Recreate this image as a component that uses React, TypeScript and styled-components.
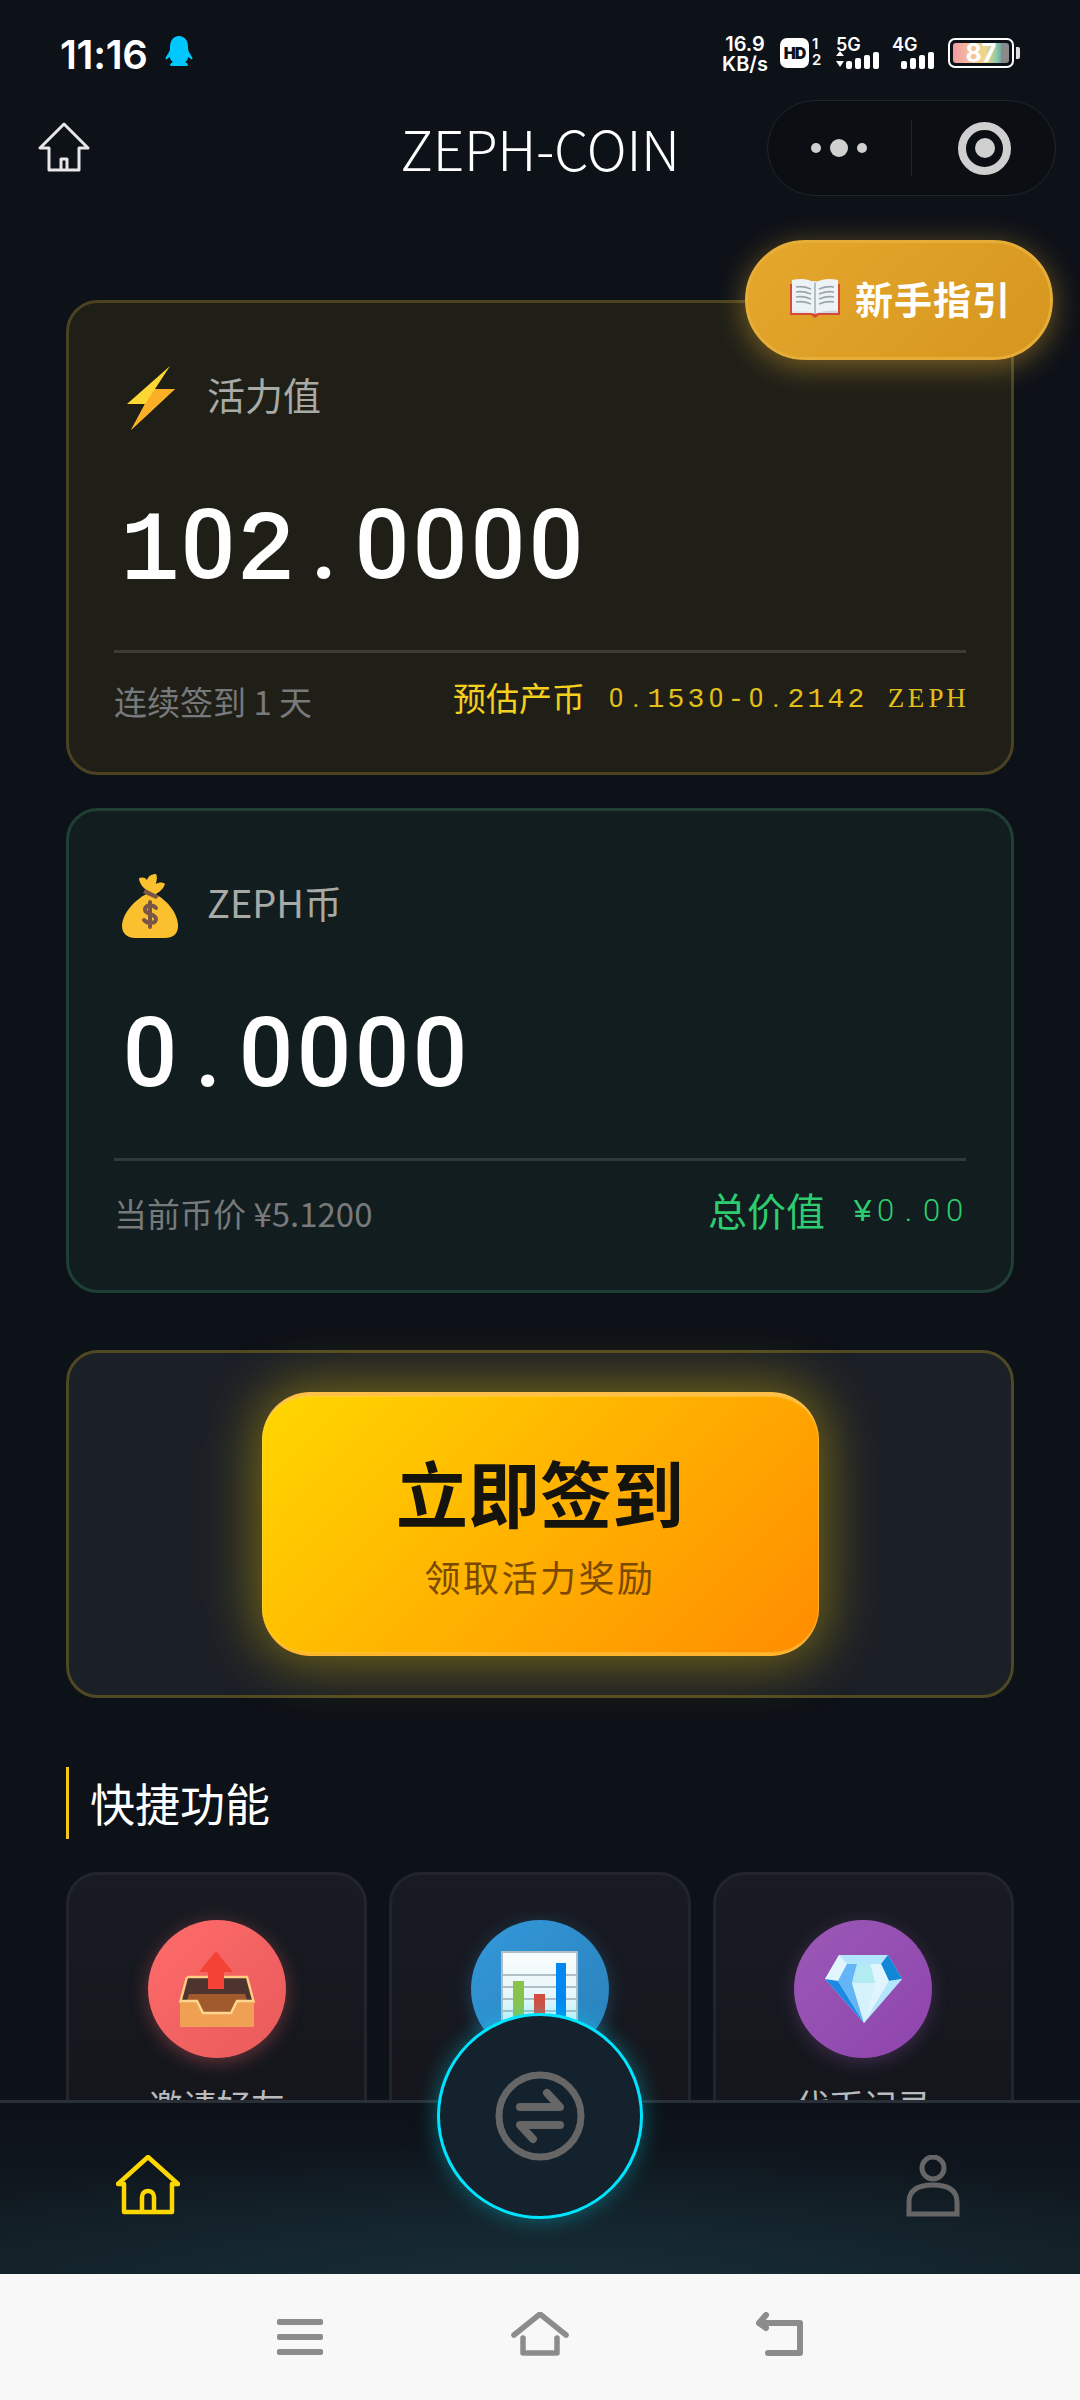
import React from "react";
import styled, { createGlobalStyle } from "styled-components";

const CJK = `"Noto Sans CJK SC", "Noto Sans", sans-serif`;
const MONO = `"Liberation Mono", "Noto Sans CJK SC", monospace`;

const Global = createGlobalStyle`
  html, body { margin: 0; padding: 0; background: #0d1118; }
  * { box-sizing: border-box; }
`;

const Screen = styled.div`
  position: relative;
  width: 1080px;
  height: 2400px;
  display: flex;
  flex-direction: column;
  overflow: hidden;
  background: #0d1118;
  font-family: ${CJK};
  color: #fff;
`;

const StatusBar = styled.div`
  height: 96px;
  flex: none;
  display: flex;
  justify-content: space-between;
  padding: 36px 66px 0 60px;
`;

const StatusLeft = styled.div`
  display: flex;
  align-items: flex-start;
  gap: 17px;
`;

const Time = styled.div`
  font-family: Inter, sans-serif;
  font-size: 40px;
  font-weight: 600;
  line-height: 36px;
  letter-spacing: -0.3px;
  padding-top: 1px;
`;

const StatusRight = styled.div`
  display: flex;
  align-items: flex-start;
  gap: 12px;
  font-family: Inter, sans-serif;
  font-weight: 600;
`;

const Speed = styled.div`
  display: flex;
  flex-direction: column;
  align-items: center;
  font-size: 20px;
  line-height: 20px;
  width: 46px;
  margin-top: -2px;
`;

const HdBadge = styled.div`
  width: 29px;
  height: 30px;
  margin-top: 2px;
  border-radius: 7px;
  background: #fff;
  color: #0d1118;
  font-size: 16px;
  font-weight: 900;
  line-height: 30px;
  text-align: center;
  letter-spacing: -1px;
`;

const SimNumbers = styled.div`
  display: flex;
  flex-direction: column;
  margin-left: -9px;
  font-size: 15px;
  line-height: 16px;
  width: 12px;
`;

const Signal = styled.div<{ $w: number }>`
  width: ${(p) => p.$w}px;
  height: 34px;
  font-size: 18px;
  line-height: 17px;
`;

const SignalSvg = styled.svg`
  display: block;
  margin-top: -2px;
`;

const Battery = styled.div`
  width: 66px;
  height: 30px;
  margin-top: 2px;
  padding: 3px;
  border: 2px solid #fff;
  border-radius: 7px;
  position: relative;
  &::after {
    content: "";
    position: absolute;
    right: -8px;
    top: 7px;
    width: 4px;
    height: 12px;
    background: #ddd;
    border-radius: 0 2px 2px 0;
  }
`;

const BatteryFill = styled.div`
  height: 100%;
  border-radius: 3px;
  background: linear-gradient(90deg, #f09aa0 0%, #f4b8a0 25%, #eed88c 58%, #8cc8a8 78%, #6ea8a0 86%, #8a8a8a 86%);
  text-align: center;
  font-size: 25px;
  font-weight: 700;
  line-height: 21px;
`;

const NavBar = styled.div`
  height: 110px;
  flex: none;
  position: relative;
  display: flex;
  align-items: center;
  justify-content: center;
  padding-bottom: 8px;
`;

const NavHome = styled.svg`
  position: absolute;
  left: 38px;
  top: 26px;
`;

const Title = styled.div`
  font-family: "Noto Sans CJK SC", sans-serif;
  font-weight: 300;
  font-size: 55px;
  line-height: 60px;
  letter-spacing: -0.3px;
`;

const Capsule = styled.div`
  position: absolute;
  left: 767px;
  top: 4px;
  width: 289px;
  height: 96px;
  border-radius: 48px;
  border: 1px solid #22252b;
  background: #0b0e13;
  display: flex;
  align-items: center;
`;

const CapsuleHalf = styled.div`
  flex: 1;
  display: flex;
  align-items: center;
  justify-content: center;
  &:first-child {
    border-right: 1px solid #22252b;
    height: 56px;
  }
`;

const Dots = styled.div`
  display: flex;
  align-items: center;
  gap: 9px;
  margin-left: -2px;
`;

const Dot = styled.span<{ $size: number }>`
  width: ${(p) => p.$size}px;
  height: ${(p) => p.$size}px;
  border-radius: 50%;
  background: #d0d0d0;
`;

const Target = styled.div`
  width: 53px;
  height: 53px;
  margin-left: 2px;
  border: 8px solid #cfcfcf;
  border-radius: 50%;
  display: flex;
  align-items: center;
  justify-content: center;
  &::before {
    content: "";
    width: 20px;
    height: 20px;
    border-radius: 50%;
    background: #cfcfcf;
  }
`;

const Content = styled.div`
  flex: 1;
  min-height: 0;
  overflow: hidden;
  padding: 94px 66px 0 66px;
  display: flex;
  flex-direction: column;
`;

const GuideButton = styled.div`
  position: absolute;
  left: 745px;
  top: 240px;
  width: 308px;
  height: 120px;
  border-radius: 60px;
  background: linear-gradient(135deg, #e5a72c, #d6961f);
  border: 3px solid #e6ad38;
  box-shadow: 0 6px 30px rgba(255, 190, 50, 0.42);
  display: flex;
  align-items: center;
  gap: 14px;
  padding: 0 0 5px 41px;
  font-size: 38px;
  font-weight: 700;
  letter-spacing: 1px;
  z-index: 3;
`;

const Card = styled.div<{ $bg: string; $border: string; $h: number; $mb: number }>`
  height: ${(p) => p.$h}px;
  margin-bottom: ${(p) => p.$mb}px;
  flex: none;
  background: ${(p) => p.$bg};
  border: 3px solid ${(p) => p.$border};
  border-radius: 32px;
  padding: 0 45px;
  display: flex;
  flex-direction: column;
`;

const CardHead = styled.div`
  display: flex;
  align-items: center;
  height: 64px;
  margin-top: 63px;
  gap: 27px;
  padding-left: 6px;
`;

const IconSlot = styled.div`
  width: 60px;
  display: flex;
  justify-content: center;
`;

const CardLabel = styled.div`
  font-size: 38px;
  line-height: 46px;
  color: #a8aaa6;
  margin-top: -8px;
`;

const CardValue = styled.div`
  color: #fff;
  height: 100px;
  margin-top: 65px;
  margin-bottom: 3px;
  padding-left: 7px;
  line-height: 100px;
`;

const MonoCell = styled.span<{ $w: number; $size: number; $stroke?: number }>`
  display: inline-block;
  width: ${(p) => p.$w}px;
  text-align: center;
  font-family: ${MONO};
  font-size: ${(p) => p.$size}px;
  -webkit-text-stroke: ${(p) => p.$stroke ?? 0}px currentColor;
`;

const ZeroCell = styled(MonoCell)<{ $weight: number }>`
  font-family: Roboto, sans-serif;
  font-weight: ${(p) => p.$weight};
  -webkit-text-stroke: 0;
`;

const LetterCell = styled(MonoCell)`
  font-family: "Liberation Serif", serif;
`;

const Divider = styled.div`
  height: 3px;
  margin-top: 52px;
  background: rgba(255, 255, 255, 0.13);
  flex: none;
`;

const CardFoot = styled.div<{ $top: number }>`
  display: flex;
  justify-content: space-between;
  align-items: center;
  height: 50px;
  margin-top: ${(p) => p.$top}px;
`;

const FootNote = styled.div`
  font-size: 33px;
  color: #77797a;
  line-height: 50px;
  margin-top: 6px;
`;

const FootValue = styled.div<{ $color: string; $size: number; $gap: number }>`
  display: flex;
  align-items: center;
  color: ${(p) => p.$color};
  font-size: ${(p) => p.$size}px;
  line-height: 50px;
  gap: ${(p) => p.$gap}px;
  margin-bottom: 3px;
`;

const FootMono = styled.span<{ $color: string }>`
  color: ${(p) => p.$color};
  line-height: 50px;
`;

const SignCard = styled.div`
  height: 348px;
  flex: none;
  margin: 57px 0 69px 0;
  border: 3px solid #4f4923;
  border-radius: 32px;
  background: #1b1f26;
  display: flex;
  align-items: center;
  justify-content: center;
`;

const SignButton = styled.div`
  width: 557px;
  height: 264px;
  border-radius: 48px;
  background: linear-gradient(135deg, #ffd700 0%, #ff8c00 100%);
  border-top: 4px solid #ffc04a;
  border-bottom: 3px solid #ffb52e;
  box-shadow: 0 0 56px 6px rgba(255, 215, 0, 0.42), inset 0 0 0 1px rgba(255, 220, 120, 0.35);
  display: flex;
  flex-direction: column;
  align-items: center;
  padding-top: 47px;
`;

const SignTitle = styled.div`
  font-size: 72px;
  font-weight: 700;
  line-height: 96px;
  color: #15130d;
`;

const SignSub = styled.div`
  font-size: 36px;
  line-height: 50px;
  letter-spacing: 2.5px;
  color: #7a4a04;
  margin-top: 12px;
`;

const SectionTitle = styled.div`
  flex: none;
  height: 72px;
  border-left: 3px solid #f5c518;
  padding-left: 21px;
  font-size: 45px;
  line-height: 72px;
  margin-bottom: 33px;
`;

const QuickGrid = styled.div`
  display: grid;
  grid-template-columns: repeat(3, 1fr);
  gap: 22px;
  flex: none;
`;

const QuickCard = styled.div`
  height: 300px;
  background: linear-gradient(180deg, #191b23, #13151a);
  border: 3px solid #22252d;
  border-radius: 32px;
  display: flex;
  flex-direction: column;
  align-items: center;
  padding-top: 45px;
`;

const QuickIcon = styled.div<{ $from: string; $to: string; $glow: string }>`
  width: 138px;
  height: 138px;
  border-radius: 50%;
  background: linear-gradient(135deg, ${(p) => p.$from}, ${(p) => p.$to});
  box-shadow: 0 4px 18px ${(p) => p.$glow};
  display: flex;
  align-items: center;
  justify-content: center;
`;

const QuickLabel = styled.div`
  font-size: 34px;
  line-height: 46px;
  margin-top: 24px;
  color: #b9bbbe;
`;

const TabBar = styled.div`
  height: 174px;
  flex: none;
  position: relative;
  border-top: 3px solid #2a3038;
  background: radial-gradient(ellipse 760px 130px at 50% 100%, rgba(24, 50, 60, 0.75) 0%, transparent 100%),
    linear-gradient(180deg, #0d1118 0%, #131e25 100%);
  display: flex;
  justify-content: space-between;
  align-items: flex-start;
  padding: 52px 120px 0 116px;
`;

const CenterButton = styled.div`
  position: absolute;
  left: 437px;
  top: -90px;
  width: 206px;
  height: 206px;
  border-radius: 50%;
  border: 3px solid #00e5ff;
  background: #13222c;
  box-shadow: 0 0 22px rgba(0, 229, 255, 0.38);
  display: flex;
  align-items: center;
  justify-content: center;
`;

const SystemNav = styled.div`
  height: 126px;
  flex: none;
  background: #f8f8f8;
  display: flex;
  align-items: flex-start;
  padding: 38px 276px 0 277px;
  justify-content: space-between;
`;

// picks a font per character, so the zeros stay plain like the screenshot
const MonoText = ({
  text,
  w,
  size,
  zeroSize,
  zeroWeight,
  stroke,
}: {
  text: string;
  w: number;
  size: number;
  zeroSize: number;
  zeroWeight: number;
  stroke?: number;
}) => (
  <>
    {text.split("").map((ch, i) => {
      if (ch === "0" || ch === ".") {
        return (
          <ZeroCell key={i} $w={w} $size={zeroSize} $weight={zeroWeight}>
            {ch}
          </ZeroCell>
        );
      }
      if (/[A-Z]/.test(ch)) {
        return (
          <LetterCell key={i} $w={w} $size={size - 1}>
            {ch}
          </LetterCell>
        );
      }
      return (
        <MonoCell key={i} $w={w} $size={size} $stroke={stroke}>
          {ch}
        </MonoCell>
      );
    })}
  </>
);

const BookIcon = () => (
  <svg width="52" height="40" viewBox="0 0 52 40">
    <path d="M1 6h50v31H30l-4 3-4-3H1z" fill="#d9483b" />
    <path d="M3 3h23v32H3z" fill="#dfe9ee" />
    <path d="M49 3H26v32h23z" fill="#c9d8e0" />
    <path d="M3 2c9-2 17-1 23 3 6-4 14-5 23-3v31c-9-1-17 0-23 3-6-3-14-4-23-3z" fill="#edf2f4" />
    <path d="M26 5v31" stroke="#9eb0ba" strokeWidth="1.5" />
    <path
      d="M7 9c5-1 10 0 15 2M7 14c5-1 10 0 15 2M7 19c5-1 10 0 15 2M7 24c5-1 10 0 15 2M30 11c5-2 10-3 15-2M30 16c5-2 10-3 15-2M30 21c5-2 10-3 15-2M30 26c5-2 10-3 15-2"
      stroke="#9aa6ac"
      strokeWidth="1.6"
      fill="none"
    />
  </svg>
);

const BoltIcon = () => (
  <svg width="50" height="64" viewBox="0 0 50 64">
    <path d="M45 0 2 38h18L6 64l44-41H30z" fill="#fdd835" />
    <path d="M50 23 6 64l14-26 10-15z" fill="#f9a825" opacity="0.85" />
  </svg>
);

const BagIcon = () => (
  <svg width="58" height="64" viewBox="0 0 58 64">
    <path d="M30 18C14 24 1 40 1 52c0 8 6 12 13 12h30c8 0 13-4 13-12 0-13-12-28-27-34z" fill="#fbc02d" />
    <path d="M28 18c-6-4-10-9-10-14 3-1 6-1 8 2 1-4 5-6 9-6 2 4 0 8 0 10 3-2 7-2 9 0-2 6-7 9-11 11z" fill="#fbc02d" />
    <path d="M24 15l14 7-3 3-13-6z" fill="#795548" />
    <path
      d="M35 34c-2-3-10-4-11 1-1 6 11 4 11 10 0 5-9 5-12 1M29 28v25"
      stroke="#795548"
      strokeWidth="4"
      fill="none"
      strokeLinecap="round"
    />
  </svg>
);

const TrayIcon = () => (
  <svg width="76" height="76" viewBox="0 0 76 76">
    <path d="M8 26h60l7 26v24H1V52z" fill="#4e342e" />
    <path d="M8 26h60l7 26" fill="none" stroke="#ffcc80" strokeWidth="2.5" />
    <path d="M8 26 1 52" fill="none" stroke="#ffcc80" strokeWidth="2.5" />
    <path d="M10 43h56l4 13H56l-4 7H24l-4-7H6z" fill="#a05a2c" />
    <path d="M1 50h17l6 12h28l6-12h17v26H1z" fill="#f0a052" />
    <path d="M1 50h17l6 12h28l6-12h17" fill="none" stroke="#ffd590" strokeWidth="2.5" />
    <path d="M37 0l17 21H45v17H29V21H20z" fill="#f44336" />
  </svg>
);

const ChartIcon = () => (
  <svg width="77" height="76" viewBox="0 0 77 76">
    <defs>
      <linearGradient id="chartPaper" x1="0" y1="0" x2="0" y2="1">
        <stop offset="0" stopColor="#fafcfc" />
        <stop offset="1" stopColor="#d8f4fa" />
      </linearGradient>
    </defs>
    <rect x="1" y="1" width="75" height="75" fill="url(#chartPaper)" stroke="#b0bec5" strokeWidth="2" />
    <path d="M1 24h75M1 36h75M1 48h75M1 60h75" stroke="#b0bec5" strokeWidth="2" />
    <path d="M12 30h11v46H12z" fill="#8bc34a" />
    <path d="M33 43h11v33H33z" fill="#d84a3c" />
    <path d="M55 12h10v64H55z" fill="#0288f0" />
  </svg>
);

const GemIcon = () => (
  <svg width="77" height="68" viewBox="0 0 77 68">
    <path d="M14 0h49l14 24-38 44L0 24z" fill="#b3e5fc" />
    <path d="M14 0 0 24l13 2L22 9z" fill="#e1f5fe" />
    <path d="M63 0l14 24-13 2-8-17z" fill="#0f86d6" />
    <path d="M0 24l13 2 26 42z" fill="#1e88e5" />
    <path d="M77 24l-13 2-25 42z" fill="#b3e5fc" />
    <path d="M13 26 22 9h10l-5 19 12 40z" fill="#64b5f6" />
    <path d="M64 26 56 9H45l5 19-11 40z" fill="#e1f5fe" />
    <path d="M32 9h13l5 19H27z" fill="#b2ebf2" />
    <path d="M27 28h23l-11 40z" fill="#d6f3fc" />
  </svg>
);

export default function App() {
  return (
    <Screen>
      <Global />
      <StatusBar>
        <StatusLeft>
          <Time>11:16</Time>
          <svg width="28" height="30" viewBox="0 0 28 30" fill="#00c8ff">
            <path d="M14 0c6 0 9 5 9 11 0 2 0 3 1 5l3 5c1 2 0 3-1 2l-3-2c0 2-1 4-3 5 2 1 3 2 3 3s-1 1-9 1-9 0-9-1 1-2 3-3c-2-1-3-3-3-5l-3 2c-1 1-2 0-1-2l3-5c1-2 1-3 1-5C5 5 8 0 14 0z" />
          </svg>
        </StatusLeft>
        <StatusRight>
          <Speed>
            <span>16.9</span>
            <span>KB/s</span>
          </Speed>
          <HdBadge>HD</HdBadge>
          <SimNumbers>
            <span>1</span>
            <span>2</span>
          </SimNumbers>
          <Signal $w={44}>
            5G
            <SignalSvg width="44" height="18" viewBox="0 0 44 18" fill="#fff">
              <path d="M0 5 4 0l4 5zM0 10h8l-4 6z" />
              <rect x="10" y="10" width="6" height="8" rx="2" />
              <rect x="19" y="7" width="6" height="11" rx="2" />
              <rect x="28" y="4" width="6" height="14" rx="2" />
              <rect x="37" y="1" width="6" height="17" rx="2" />
            </SignalSvg>
          </Signal>
          <Signal $w={44}>
            4G
            <SignalSvg width="44" height="18" viewBox="0 0 44 18" fill="#fff">
              <rect x="9" y="10" width="6" height="8" rx="2" />
              <rect x="18" y="7" width="6" height="11" rx="2" />
              <rect x="27" y="4" width="6" height="14" rx="2" />
              <rect x="36" y="1" width="6" height="17" rx="2" />
            </SignalSvg>
          </Signal>
          <Battery>
            <BatteryFill>87</BatteryFill>
          </Battery>
        </StatusRight>
      </StatusBar>

      <NavBar>
        <NavHome width="52" height="50" viewBox="0 0 52 50" fill="none" stroke="#e8e8e8" strokeWidth="3" strokeLinejoin="round">
          <path d="M26 2 2 26h9v22h30V26h9z" />
          <path d="M23 48V37h6v11" />
        </NavHome>
        <Title>ZEPH-COIN</Title>
        <Capsule>
          <CapsuleHalf>
            <Dots>
              <Dot $size={10} />
              <Dot $size={18} />
              <Dot $size={10} />
            </Dots>
          </CapsuleHalf>
          <CapsuleHalf>
            <Target />
          </CapsuleHalf>
        </Capsule>
      </NavBar>

      <GuideButton>
        <BookIcon />
        新手指引
      </GuideButton>

      <Content>
        <Card $bg="#1f1f18" $border="#4a4220" $h={475} $mb={33}>
          <CardHead>
            <IconSlot>
              <BoltIcon />
            </IconSlot>
            <CardLabel>活力值</CardLabel>
          </CardHead>
          <CardValue>
            <MonoText text="102.0000" w={58} size={96} zeroSize={96} zeroWeight={500} stroke={2.2} />
          </CardValue>
          <Divider />
          <CardFoot $top={20}>
            <FootNote>连续签到 1 天</FootNote>
            <FootValue $color="#f5cf1d" $size={33} $gap={21}>
              预估产币
              <FootMono $color="#e2c01c">
                <MonoText text="0.1530-0.2142 ZEPH" w={20} size={28} zeroSize={26} zeroWeight={400} />
              </FootMono>
            </FootValue>
          </CardFoot>
        </Card>

        <Card $bg="#111d1e" $border="#1f3f35" $h={485} $mb={0}>
          <CardHead>
            <IconSlot>
              <BagIcon />
            </IconSlot>
            <CardLabel>ZEPH币</CardLabel>
          </CardHead>
          <CardValue>
            <MonoText text="0.0000" w={58} size={96} zeroSize={96} zeroWeight={500} stroke={2.2} />
          </CardValue>
          <Divider />
          <CardFoot $top={24}>
            <FootNote>当前币价 ¥5.1200</FootNote>
            <FootValue $color="#2ecc71" $size={39} $gap={26}>
              总价值
              <FootMono $color="#2ecc71">
                <MonoText text="¥0.00" w={23} size={32} zeroSize={31} zeroWeight={300} />
              </FootMono>
            </FootValue>
          </CardFoot>
        </Card>

        <SignCard>
          <SignButton>
            <SignTitle>立即签到</SignTitle>
            <SignSub>领取活力奖励</SignSub>
          </SignButton>
        </SignCard>

        <SectionTitle>快捷功能</SectionTitle>
        <QuickGrid>
          <QuickCard>
            <QuickIcon $from="#ff6b6b" $to="#e85a5a" $glow="rgba(255,107,107,0.35)">
              <TrayIcon />
            </QuickIcon>
            <QuickLabel>邀请好友</QuickLabel>
          </QuickCard>
          <QuickCard>
            <QuickIcon $from="#3498db" $to="#2980b9" $glow="rgba(52,152,219,0.3)">
              <ChartIcon />
            </QuickIcon>
            <QuickLabel>数据统计</QuickLabel>
          </QuickCard>
          <QuickCard>
            <QuickIcon $from="#9b59b6" $to="#8e44ad" $glow="rgba(155,89,182,0.3)">
              <GemIcon />
            </QuickIcon>
            <QuickLabel>代币记录</QuickLabel>
          </QuickCard>
        </QuickGrid>
      </Content>

      <TabBar>
        <svg width="64" height="60" viewBox="0 0 64 60" fill="none" stroke="#ffd700" strokeWidth="4.5" strokeLinejoin="round" strokeLinecap="round">
          <path d="M32 2 2 29h6v28h48V29h6z" />
          <path d="M26 57V42c0-8 12-8 12 0v15" />
        </svg>
        <CenterButton>
          <svg width="90" height="90" viewBox="0 0 90 90" fill="none" stroke="#666" strokeWidth="7" strokeLinecap="round" strokeLinejoin="round">
            <circle cx="45" cy="45" r="41" />
            <path d="M25 36h40L52 22" strokeWidth="8" />
            <path d="M65 54H25l13 14" strokeWidth="8" />
          </svg>
        </CenterButton>
        <svg width="54" height="62" viewBox="0 0 54 62" fill="none" stroke="#666" strokeWidth="5">
          <circle cx="27" cy="13" r="11" />
          <path d="M3 59V47c0-11 8-17 24-17s24 6 24 17v12z" />
        </svg>
      </TabBar>

      <SystemNav>
        <svg width="46" height="44" viewBox="0 0 46 44" fill="#8c8c8c">
          <rect x="0" y="7" width="46" height="6" rx="2" />
          <rect x="0" y="22" width="46" height="6" rx="2" />
          <rect x="0" y="37" width="46" height="6" rx="2" />
        </svg>
        <svg width="58" height="44" viewBox="0 0 58 44" fill="none" stroke="#8c8c8c" strokeWidth="5.5" strokeLinejoin="round" strokeLinecap="round">
          <path d="M3 23 29 2l26 21" />
          <path d="M12 26v15h34V26" />
        </svg>
        <svg width="48" height="44" viewBox="0 0 48 44" fill="none" stroke="#8c8c8c" strokeWidth="6" strokeLinejoin="round" strokeLinecap="round">
          <path d="M4 11h40v30H12" />
          <path d="M10 3 3 11l7 5" />
        </svg>
      </SystemNav>
    </Screen>
  );
}
